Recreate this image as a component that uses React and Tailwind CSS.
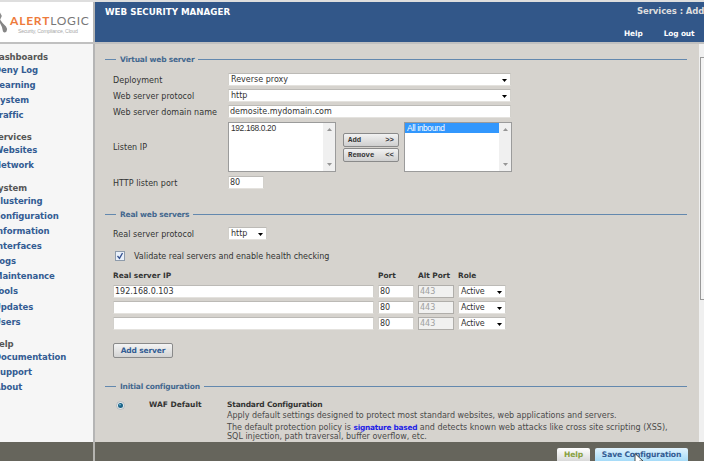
import React from 'react';

const menu = [
  { title: 'Dashboards', items: ['Deny Log', 'Learning', 'System', 'Traffic'] },
  { title: 'Services', items: ['Websites', 'Network'] },
  {
    title: 'System',
    items: [
      'Clustering',
      'Configuration',
      'Information',
      'Interfaces',
      'Logs',
      'Maintenance',
      'Tools',
      'Updates',
      'Users',
    ],
  },
  { title: 'Help', items: ['Documentation', 'Support', 'About'] },
];

const servers = ['192.168.0.103', '', ''];

const fieldBase =
  'flex items-center h-[13px] pt-px bg-white border border-t-[#bcbab6] border-x-[#d2d0cb] border-b-[#e4e2de] rounded-[1px] text-[8px] leading-[10px] text-[#333] whitespace-nowrap';

const Caret = ({ className = '' }) => (
  <svg viewBox="0 0 5 3" className={`w-[5px] h-[3px] shrink-0 ${className}`}>
    <path d="M0 0h5L2.5 3z" fill="currentColor" />
  </svg>
);

const Field = ({ value, className = '' }) => (
  <div className={`${fieldBase} pl-[1px] ${className}`}>{value}</div>
);

const Select = ({ value, className = '' }) => (
  <div className={`${fieldBase} justify-between pl-[2px] pr-[3px] ${className}`}>
    <span>{value}</span>
    <Caret className="text-black" />
  </div>
);

const Section = ({ title, className = '' }) => (
  <div className={`flex items-center h-[12px] pl-[10px] pr-[12px] ${className}`}>
    <div className="w-[11px] h-px bg-[#6388ae]" />
    <h2 className="px-[4px] pt-[2px] text-[7.5px] leading-[10px] tracking-[-0.2px] font-bold text-[#44688f] whitespace-nowrap">
      {title}
    </h2>
    <div className="flex-1 h-px bg-[#6388ae]" />
  </div>
);

const Row = ({ label, children, className = '' }) => (
  <div className={`flex items-center pl-[18px] ${className}`}>
    <div className="w-[115px] shrink-0 pt-[2px] text-[8px] leading-[10px] tracking-[0.04px] text-[#333] whitespace-nowrap">
      {label}
    </div>
    {children}
  </div>
);

const ListBox = ({ children }) => (
  <div className="flex w-[108px] h-[50px] bg-white border border-[#9b9b9b]">
    <div className="flex-1 font-['Liberation_Sans'] text-[8.4px] tracking-[-0.35px] leading-[10px] text-[#333]">
      {children}
    </div>
    <div className="w-[12px] bg-[#f0f0f0] flex flex-col items-center justify-between py-[5px] text-[#969696]">
      <Caret className="rotate-180" />
      <Caret />
    </div>
  </div>
);

const MoveButton = ({ label, arrows }) => (
  <button className="flex justify-between items-center w-[56px] h-[14px] pt-px px-[4px] rounded-[2px] border border-[#8a8a8a] bg-gradient-to-b from-[#f2f2f2] to-[#cfcfcf] font-['Liberation_Mono'] font-bold text-[7.3px] leading-[10px] text-[#333]">
    <span>{label}</span>
    <span>{arrows}</span>
  </button>
);

const Logo = () => (
  <div className="flex w-[93px] h-[40px] bg-white">
    <svg viewBox="0 0 10 40" className="w-[10px] h-[40px] shrink-0">
      <path d="M0 10.5L1.8 14 0 18z" fill="#8b8b8b" />
      <path d="M0 17.5Q2.5 21.5 6 24.5Q8 27 6.5 29.5Q4.5 31.5 3 29.5Q2.5 25 0 21z" fill="#858585" />
    </svg>
    <div className="pt-[12px] whitespace-nowrap">
      <div className="h-[14px] font-['Lato'] text-[12px] leading-[14px] tracking-[0.8px] text-[#777]">
        <span className="text-[#ee7b3c] font-bold">ALERT</span>LOGIC
      </div>
      <div className="pl-[8px] font-['Liberation_Sans'] text-[5.2px] tracking-[-0.2px] leading-[6px] text-[#aaa]">
        Security, Compliance, Cloud
      </div>
    </div>
  </div>
);

const Sidebar = () => (
  <nav className="w-[93px] h-[398px] bg-[#f6f6f6] pt-[6.5px] font-bold text-[8.5px] tracking-[-0.08px] whitespace-nowrap overflow-hidden">
    {menu.map(group => (
      <div key={group.title} className="mb-[8.4px]">
        <div className="h-[12px] leading-[12px] -ml-[8px] text-[#555]">{group.title}</div>
        {group.items.map(item => (
          <div key={item} className="h-[15.1px] leading-[15px] -ml-[6px] text-[#335c93]">
            {item}
          </div>
        ))}
      </div>
    ))}
  </nav>
);

const Header = () => (
  <header className="flex-1 h-[40px] bg-[#325789] text-white font-bold flex justify-between pl-[10px] overflow-hidden">
    <h1 className="text-[8.7px] leading-[20px] whitespace-nowrap">WEB SECURITY MANAGER</h1>
    <div className="flex flex-col w-[72px] whitespace-nowrap">
      <div className="pl-[5px] text-[8.5px] tracking-[-0.08px] leading-[19px] text-[#dedede]">Services : Add</div>
      <div className="text-[7.4px] tracking-[-0.1px] leading-[25px] -ml-[8px] flex gap-[21px]">
        <span>Help</span>
        <span>Log out</span>
      </div>
    </div>
  </header>
);

const VirtualServer = () => (
  <>
    <Section title="Virtual web server" className="mt-[9px]" />
    <div className="flex flex-col gap-[3px] mt-[8px]">
      <Row label="Deployment">
        <Select value="Reverse proxy" className="w-[283px]" />
      </Row>
      <Row label="Web server protocol">
        <Select value="http" className="w-[283px]" />
      </Row>
      <Row label="Web server domain name">
        <Field value="demosite.mydomain.com" className="w-[283px]" />
      </Row>
    </div>
    <Row label="Listen IP" className="mt-[4px]">
      <ListBox>
        <div className="pl-[2px]">192.168.0.20</div>
      </ListBox>
      <div className="flex flex-col gap-[1px] ml-[7px] mr-[5px]">
        <MoveButton label="Add" arrows=">>" />
        <MoveButton label="Remove" arrows="<<" />
      </div>
      <ListBox>
        <div className="pl-[2px] bg-[#3297fd] text-white">All inbound</div>
      </ListBox>
    </Row>
    <Row label="HTTP listen port" className="mt-[4px]">
      <Field value="80" className="w-[36px]" />
    </Row>
  </>
);

const RealServers = () => (
  <>
    <Section title="Real web servers" className="mt-[19px]" />
    <Row label="Real server protocol" className="mt-[7px]">
      <Select value="http" className="w-[39px]" />
    </Row>
    <div className="flex items-center mt-[10px] pl-[20px] h-[11px]">
      <div className="w-[10px] h-[10px] border border-[#8e9bab] bg-[#e9f0fa] flex items-center justify-center">
        <svg viewBox="0 0 8 8" className="w-[8px] h-[8px]">
          <path d="M1.5 4l2 2.4L6.5 1" fill="none" stroke="#34508e" strokeWidth="1.3" />
        </svg>
      </div>
      <span className="pl-[9px] pt-[2px] text-[8px] leading-[10px] text-[#333] whitespace-nowrap">
        Validate real servers and enable health checking
      </span>
    </div>
    <div className="grid grid-cols-[261px_36px_36px_48px] gap-x-[4px] gap-y-[3px] pl-[18px] mt-[8px] text-[8px] text-[#333] whitespace-nowrap">
      <b className="leading-[13px] text-[7.4px]">Real server IP</b>
      <b className="leading-[13px] text-[7.4px]">Port</b>
      <b className="leading-[13px] text-[7.4px]">Alt Port</b>
      <b className="leading-[13px] text-[7.4px]">Role</b>
      {servers.map((ip, i) => (
        <React.Fragment key={i}>
          <Field value={ip} />
          <Field value="80" />
          <div className="flex items-center h-[13px] pt-px px-[1px] border border-[#b0aeaa] bg-[#f1f1f0] leading-[10px] text-[#a0a0a0]">
            443
          </div>
          <Select value="Active" className="tracking-[-0.2px]" />
        </React.Fragment>
      ))}
    </div>
    <div className="pl-[18px] mt-[13px]">
      <button className="block w-[60px] h-[15px] rounded-[2px] border border-[#8a8a8a] bg-gradient-to-b from-[#f4f4f4] to-[#d3d3d3] text-[7.5px] tracking-[-0.15px] leading-[13px] font-bold text-[#335c93] whitespace-nowrap">
        Add server
      </button>
    </div>
  </>
);

const InitialConfig = () => (
  <>
    <Section title="Initial configuration" className="mt-[22px]" />
    <div className="flex mt-[7px] pl-[21px] text-[8px] text-[#4a4a4a] whitespace-nowrap">
      <svg viewBox="0 0 9 9" className="w-[9px] h-[9px] mt-[2px] shrink-0">
        <circle cx="4.5" cy="4.5" r="4" fill="#e4e8ea" stroke="#a3adb3" strokeWidth="0.7" />
        <circle cx="4.5" cy="4.5" r="2.5" fill="#1c6488" />
        <circle cx="4" cy="3.8" r="0.8" fill="#8fd4ee" />
      </svg>
      <b className="w-[78px] ml-[24px] leading-[12px] text-[7.5px] text-[#333]">WAF Default</b>
      <div>
        <b className="block leading-[12px] text-[7.5px] tracking-[-0.18px] text-[#333]">Standard Configuration</b>
        <p className="leading-[10px] tracking-[-0.02px]">
          Apply default settings designed to protect most standard websites, web applications and servers.
        </p>
        <p className="leading-[9px] mt-[2px]">
          The default protection policy is{' '}
          <span className="text-[#2121e6] font-bold text-[7.4px] tracking-[-0.25px]">signature based</span> and
          detects known web attacks like cross site scripting (XSS),
          <br />
          SQL injection, path traversal, buffer overflow, etc.
        </p>
      </div>
    </div>
  </>
);

const Scrollbar = () => (
  <div className="w-[5px] h-[398px] bg-[#f0f0f0] flex flex-col items-end pt-[13px]">
    <div className="w-[4px] h-[243px] bg-[#f4f4f4] border border-r-0 border-[#999]" />
  </div>
);

const Footer = () => (
  <footer className="flex h-[19px] bg-[#66655c]">
    <div className="w-[93px]" />
    <div className="w-[2px] bg-[#b5b4b0]" />
    <div className="flex flex-1 justify-end gap-[5px] pt-[6px] pr-[16px] font-bold text-[7.6px] tracking-[-0.15px] whitespace-nowrap">
      <button className="w-[33px] h-[13px] rounded-t-[2px] bg-gradient-to-b from-white to-[#d9d9d9] text-[#87a03e]">
        Help
      </button>
      <button className="w-[93px] h-[13px] rounded-t-[2px] bg-gradient-to-b from-[#e2f3fd] to-[#a5dbf8] text-[#335c93]">
        Save Configuration
      </button>
    </div>
  </footer>
);

const App = () => (
  <div className="relative w-[704px] h-[461px] overflow-hidden bg-[#d6d3ce] font-['DejaVu_Sans',sans-serif]">
    <div className="h-[2px] bg-[#dedede]" />
    <div className="flex border-b-2 border-[#c0c0c0]">
      <Logo />
      <div className="w-[2px] bg-[#b5b5b5]" />
      <Header />
    </div>
    <div className="flex h-[398px]">
      <Sidebar />
      <div className="w-[2px] bg-[#b5b5b5]" />
      <main className="w-[604px] h-[398px] overflow-hidden">
        <VirtualServer />
        <RealServers />
        <InitialConfig />
      </main>
      <Scrollbar />
    </div>
    <Footer />
    {/* Mouse pointer over the save button */}
    <svg viewBox="0 0 10 14" className="absolute left-[634px] top-[453px] w-[10px] h-[14px]">
      <path d="M1 0.5v10.5l2.5-2.3 1.8 4 1.8-.8-1.8-3.8H9z" fill="white" stroke="#222" strokeWidth="0.8" />
    </svg>
  </div>
);

export default App;
